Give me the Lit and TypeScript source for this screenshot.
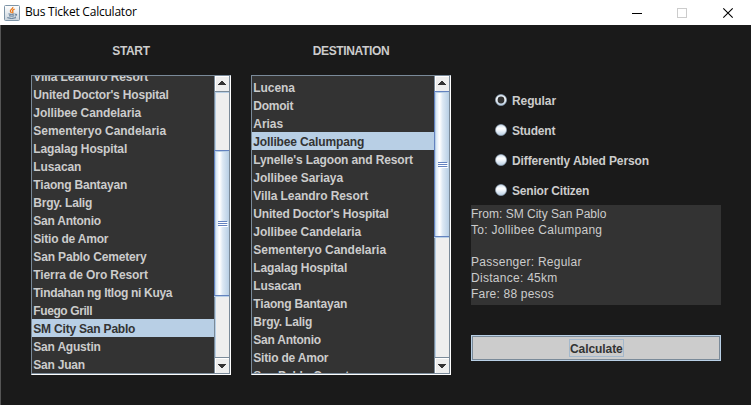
import { LitElement, html, svg, css, nothing } from "lit";
import { customElement, property, state } from "lit/decorators.js";
import { classMap } from "lit/directives/class-map.js";
import { styleMap } from "lit/directives/style-map.js";

interface Label {
  text: string;
  tracking: number;
}

const label = (text: string, tracking = 0): Label => ({ text, tracking });

const spaced = (l: Label) =>
  html`<span style=${styleMap({ letterSpacing: `${l.tracking}px` })}>${l.text}</span>`;

const STOPS: Label[] = [
  label("Lucena", -0.08),
  label("Domoit", -0.25),
  label("Arias", -0.05),
  label("Jollibee Calumpang", -0.14),
  label("Lynelle's Lagoon and Resort", -0.13),
  label("Jollibee Sariaya", -0.06),
  label("Villa Leandro Resort", -0.08),
  label("United Doctor's Hospital", -0.17),
  label("Jollibee Candelaria", -0.08),
  label("Sementeryo Candelaria", -0.03),
  label("Lagalag Hospital", -0.14),
  label("Lusacan", -0.1),
  label("Tiaong Bantayan", -0.18),
  label("Brgy. Lalig", -0.22),
  label("San Antonio", -0.24),
  label("Sitio de Amor", -0.2),
  label("San Pablo Cemetery", -0.15),
  label("Tierra de Oro Resort", -0.1),
  label("Tindahan ng Itlog ni Kuya", -0.3),
  label("Fuego Grill", -0.4),
  label("SM City San Pablo", -0.2),
  label("San Agustin", -0.2),
  label("San Juan", -0.22),
];

@customElement("metal-scrollbar")
class MetalScrollbar extends LitElement {
  @property({ type: Number }) offset = 0;
  @property({ type: Number }) size = 146;

  static styles = css`
    :host {
      display: flex;
      flex-direction: column;
      flex: none;
      width: 16px;
      height: 297px;
      box-sizing: border-box;
      border-right: 1px solid #7a8a99;
    }
    .arrow {
      flex: none;
      display: flex;
      box-sizing: border-box;
      height: 16px;
      background: #eeeeee;
      border-left: 1px solid #7a8a99;
      box-shadow: inset 1px 1px 0 #fff;
    }
    .up {
      border-bottom: 1px solid #7a8a99;
    }
    .down {
      border-top: 1px solid #7a8a99;
    }
    .track {
      flex: 1;
      background: #eeeeee;
      border-left: 1px solid #7a8a99;
      box-shadow: inset 1px 1px 0 #b8cfe5;
    }
    .thumb {
      position: relative;
      display: flex;
      flex-direction: column;
      align-items: flex-start;
      box-sizing: border-box;
      padding-top: 70px;
      margin-left: -1px;
      border: 1px solid #6382bf;
      border-right: 0;
      background: linear-gradient(90deg, #c8ddf2 0, #ffffff 30%, #ffffff 34%, #dce8f4 55%, #b8cfe5 100%);
      box-shadow: inset 1px 1px 0 #b8cfe5, 0 1px 0 #b8cfe5;
    }
    .grip {
      width: 9px;
      height: 1px;
      margin: 0 0 1px 3px;
      background: #6382bf;
      box-shadow: 1px 1px 0 #fff;
    }
  `;

  render() {
    return html`
      <div class="arrow up">
        <svg width="14" height="15" shape-rendering="crispEdges">
          <path fill="#333" d="M6 5h2v1h1v1h1v1h1v1H3V8h1V7h1V6h1z" />
        </svg>
      </div>
      <div class="track">
        <div
          class="thumb"
          style=${styleMap({ height: `${this.size}px`, top: `${this.offset}px` })}
        >
          <i class="grip"></i><i class="grip"></i><i class="grip"></i>
        </div>
      </div>
      <div class="arrow down">
        <svg width="14" height="15" shape-rendering="crispEdges">
          <path fill="#333" d="M3 6h8v1h-1v1H9v1H8v1H6V9H5V8H4V7H3z" />
        </svg>
      </div>
    `;
  }
}

@customElement("stop-list")
class StopList extends LitElement {
  @property({ type: Array }) items: Label[] = [];
  @property() selected = "";
  @property({ type: Number }) shift = 0;
  @property({ type: Number }) offset = 0;

  static styles = css`
    :host {
      display: flex;
      box-sizing: border-box;
      width: 200px;
      height: 300px;
      border-top: 1px solid #7a8a99;
      border-left: 1px solid #7a8a99;
      border-right: 1px solid #fff;
      border-bottom: 1px solid #fff;
    }
    .pane {
      display: flex;
      flex: 1;
      height: 297px;
      border-bottom: 1px solid #7a8a99;
      overflow: hidden;
    }
    .view {
      flex: 1;
      height: 297px;
      overflow: hidden;
      background: #333;
    }
    .rows {
      display: flex;
      flex-direction: column;
    }
    .row {
      flex: none;
      height: 18px;
      padding-left: 1.3px;
      line-height: 20px;
      white-space: nowrap;
      color: #ccc;
    }
    .selected {
      background: #b8cfe5;
      color: #333;
    }
  `;

  render() {
    return html`<div class="pane">
      <div class="view">
        <div class="rows" style=${styleMap({ marginTop: `${this.shift}px` })}>
          ${this.items.map(
            (item) =>
              html`<div class=${classMap({ row: true, selected: item.text === this.selected })}>${spaced(item)}</div>`
          )}
        </div>
      </div>
      <metal-scrollbar .offset=${this.offset}></metal-scrollbar>
    </div>`;
  }
}

@customElement("app-root")
class AppRoot extends LitElement {
  @state() private passenger = "Regular";
  private kinds = [
    label("Regular", -0.1),
    label("Student", -0.2),
    label("Differently Abled Person", -0.11),
    label("Senior Citizen", -0.2),
  ];

  static styles = css`
    :host {
      display: flex;
      flex-direction: column;
      width: 751px;
      height: 405px;
      overflow: hidden;
      background: #1a1a1a;
      font: bold 12px "Liberation Sans", Arial, sans-serif;
      color: #ccc;
    }
    .titlebar {
      display: flex;
      align-items: center;
      flex: none;
      height: 25px;
      padding-left: 4px;
      background: #fff;
      color: #000;
    }
    .title {
      flex: 1;
      margin-left: 5px;
      font: 12px/22px "Open Sans", "Noto Sans", sans-serif;
      height: 24px;
      letter-spacing: -0.22px;
    }
    .controls {
      flex: none;
      display: block;
    }
    .content {
      flex: 1;
      display: flex;
      gap: 20px;
      padding-left: 30px;
      border-left: 1px solid #555;
    }
    .column {
      width: 200px;
    }
    .heading {
      height: 50px;
      line-height: 52px;
      text-align: center;
      letter-spacing: -0.35px;
    }
    .side {
      width: 250px;
      padding-top: 60px;
    }
    .option {
      display: flex;
      align-items: center;
      height: 30px;
      padding-left: 24px;
      gap: 5px;
      line-height: 16px;
    }
    .option span {
      padding-top: 2px;
    }
    .options {
      height: 120px;
    }
    .output {
      height: 100px;
      background: #333;
      font-weight: normal;
      line-height: 16px;
      padding-top: 1px;
      box-sizing: border-box;
    }
    .line {
      height: 16px;
      white-space: nowrap;
    }
    .button {
      display: flex;
      align-items: center;
      justify-content: center;
      box-sizing: border-box;
      width: 250px;
      height: 26px;
      margin-top: 30px;
      border: 1px solid #b8cfe5;
      background: #ccc;
      box-shadow: inset 0 0 0 1px #7a8a99;
      color: #333;
    }
    .focus {
      box-sizing: border-box;
      width: 55px;
      height: 18px;
      margin-left: 1px;
      line-height: 18px;
      letter-spacing: -0.08px;
      border: 1px solid #a3b8cc;
    }
  `;

  private radio(on: boolean) {
    return html`<svg width="12" height="12">
      <defs>
        <linearGradient id="g" x1="0" y1="0" x2="0" y2="1">
          <stop offset="0" stop-color="#cfdfee" />
          <stop offset=".35" stop-color="#fff" />
          <stop offset=".5" stop-color="#f4f8fc" />
          <stop offset="1" stop-color="#b8cfe5" />
        </linearGradient>
      </defs>
      <circle cx="6" cy="6" r="5.5" fill="url(#g)" stroke="#8fa3b8" stroke-width=".7" />
      ${on ? svg`<circle cx="6" cy="6" r="3.4" fill="#333" />` : nothing}
    </svg>`;
  }

  render() {
    const summary = [
      label("From: SM City San Pablo"),
      label("To: Jollibee Calumpang", 0.3),
      label(""),
      label(`Passenger: ${this.passenger}`, 0.26),
      label("Distance: 45km", 0.28),
      label("Fare: 88 pesos", 0.2),
    ];
    return html`
      <div class="titlebar">
        <svg width="16" height="16" viewBox="0 0 16 16">
          <defs>
            <linearGradient id="j" x1="0" y1="0" x2="0" y2="1">
              <stop offset="0" stop-color="#fff" />
              <stop offset="1" stop-color="#c9d3dc" />
            </linearGradient>
          </defs>
          <rect x=".5" y=".5" width="15" height="15" rx="1" fill="url(#j)" stroke="#7e95a8" />
          <path d="M8.8 2C9.4 3.8 5.8 4.8 6.4 6.2Q6.6 7 7.6 8.2M10.6 4.2C8.4 5.2 8.2 5.7 8.9 6.8Q9.2 7.4 8.4 8.3" fill="none" stroke="#ec7a1c" stroke-width="1.3" />
          <path d="M4.5 8.9Q7.5 10 10.5 8.9M5 10.8Q8 11.5 10.3 10.8M3.3 12.7Q7.5 14.2 12 12.7M11 9.2Q13.6 8.9 12.4 10.4L11.2 11.2" fill="none" stroke="#54728f" />
        </svg>
        <div class="title">Bus Ticket Calculator</div>
        <svg class="controls" width="119" height="24" fill="none">
          <path d="M0 12.5h10" stroke="#000" />
          <rect x="45.5" y="7.5" width="9" height="9" stroke="#ccc" />
          <path d="M91.3 7.3l9.4 9.4M100.7 7.3l-9.4 9.4" stroke="#000" stroke-width="1.1" />
        </svg>
      </div>
      <div class="content">
        <div class="column">
          <div class="heading">START</div>
          <stop-list .items=${STOPS.slice(6)} selected="SM City San Pablo" .shift=${-9} .offset=${58}></stop-list>
        </div>
        <div class="column">
          <div class="heading">DESTINATION</div>
          <stop-list .items=${STOPS.slice(0, 17)} selected="Jollibee Calumpang" .shift=${2} .offset=${-1}></stop-list>
        </div>
        <div class="side">
          <div class="options">
            ${this.kinds.map(
              (k) => html`<div class="option" @click=${() => (this.passenger = k.text)}>
                ${this.radio(k.text === this.passenger)}${spaced(k)}
              </div>`
            )}
          </div>
          <div class="output">${summary.map((l) => html`<div class="line">${spaced(l)}</div>`)}</div>
          <div class="button"><span class="focus">Calculate</span></div>
        </div>
      </div>
    `;
  }
}
